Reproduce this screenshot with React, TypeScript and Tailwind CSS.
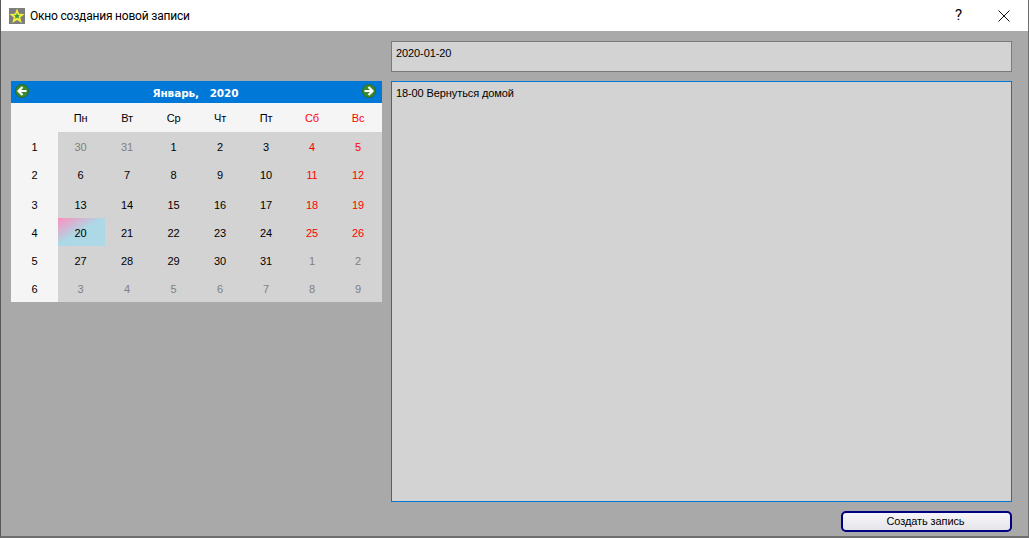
const WEEKDAYS = ["Пн", "Вт", "Ср", "Чт", "Пт", "Сб", "Вс"];

type Day = { n: number; muted?: boolean };

const WEEKS: { week: number; days: Day[] }[] = [
  { week: 1, days: [{ n: 30, muted: true }, { n: 31, muted: true }, { n: 1 }, { n: 2 }, { n: 3 }, { n: 4 }, { n: 5 }] },
  { week: 2, days: [{ n: 6 }, { n: 7 }, { n: 8 }, { n: 9 }, { n: 10 }, { n: 11 }, { n: 12 }] },
  { week: 3, days: [{ n: 13 }, { n: 14 }, { n: 15 }, { n: 16 }, { n: 17 }, { n: 18 }, { n: 19 }] },
  { week: 4, days: [{ n: 20 }, { n: 21 }, { n: 22 }, { n: 23 }, { n: 24 }, { n: 25 }, { n: 26 }] },
  { week: 5, days: [{ n: 27 }, { n: 28 }, { n: 29 }, { n: 30 }, { n: 31 }, { n: 1, muted: true }, { n: 2, muted: true }] },
  { week: 6, days: [{ n: 3, muted: true }, { n: 4, muted: true }, { n: 5, muted: true }, { n: 6, muted: true }, { n: 7, muted: true }, { n: 8, muted: true }, { n: 9, muted: true }] },
];

function NavArrow({ dir }: { dir: "left" | "right" }) {
  return (
    <svg width="14" height="14" viewBox="0 0 14 14">
      <circle cx="7" cy="7" r="6.5" fill="#3c8a2e" stroke="#2c6b24" />
      <path
        d={dir === "left" ? "M11.5 7H4M7.5 3 3.5 7 7.5 11" : "M2.5 7H10M6.5 3 10.5 7 6.5 11"}
        fill="none"
        stroke="#fff"
        strokeWidth="2.2"
      />
    </svg>
  );
}

function StarIcon() {
  return (
    <div className="flex h-4 w-4 items-center justify-center bg-[#7d7d7d]">
      <svg width="16" height="16" viewBox="0 0 16 16">
        <path d="M8 0.5 10 5.8 15.6 6 11.2 9.5 12.8 15 8 11.9 3.2 15 4.8 9.5 0.4 6 6 5.8Z" fill="#f5ee3c" />
        <path d="M8 5 9 7 11 7.2 9.5 8.7 10 10.8 8 9.7 6 10.8 6.5 8.7 5 7.2 7 7Z" fill="#3f9a45" />
      </svg>
    </div>
  );
}

function Calendar() {
  return (
    <div className="w-[371px] font-['Liberation_Sans',sans-serif] text-[11px] tracking-[-0.2px] text-black">
      <div className="flex h-[22px] items-center justify-between bg-[#0078d7] pl-[4px] pr-[6px]">
        <div className="-mt-[2px]"><NavArrow dir="left" /></div>
        <span className="pt-[4px] font-['DejaVu_Sans',sans-serif] text-[10.5px] font-bold tracking-[-0.1px] text-white">Январь,&nbsp;&nbsp;&nbsp;2020</span>
        <div className="-mt-[2px]"><NavArrow dir="right" /></div>
      </div>
      <div className="grid h-[29px] grid-cols-[47px_47px_46px_47px_46px_46px_46px_46px] items-center bg-[#f5f5f5] pt-[1px]">
        <span />
        {WEEKDAYS.map((d, i) => (
          <span key={d} className={`pr-[2px] text-center ${i >= 5 ? "text-[#ff0000]" : ""}`}>{d}</span>
        ))}
      </div>
      <div className="grid h-[170px] grid-cols-[47px_47px_46px_47px_46px_46px_46px_46px] grid-rows-[29px_28px_29px_28px_28px_28px] bg-[#d3d3d3]">
        {WEEKS.map((w) => {
          const rowPad = w.week > 2 ? "pt-[3px]" : "pt-[1px]";
          return (
            <div key={w.week} className="contents">
              <span className={`flex items-center justify-center bg-[#f5f5f5] ${rowPad}`}>{w.week}</span>
              {w.days.map((d, i) => {
                const selected = w.week === 4 && d.n === 20;
                const color = d.muted ? "text-[#808080]" : i >= 5 ? "text-[#ff0000]" : "text-black";
                return (
                  <span
                    key={i}
                    className={`flex items-center justify-center pr-[2px] ${rowPad} ${color} ${
                      selected ? "bg-[linear-gradient(150deg,#ff8fbe_0%,#add8e6_48%,#add8e6_100%)]" : ""
                    }`}
                  >
                    {d.n}
                  </span>
                );
              })}
            </div>
          );
        })}
      </div>
    </div>
  );
}

export default function App() {
  return (
    <div className="flex h-[538px] w-[1029px] flex-col overflow-hidden border-b-2 border-l border-r border-b-[#6e6e6e] border-l-[#5a5a5a] border-r-[#6e6e6e] bg-[#a9a9a9] font-['Roboto',sans-serif]">
      <div className="flex h-[31px] shrink-0 items-center bg-white pl-[8px]">
        <StarIcon />
        <span className="ml-[5px] text-[12px] tracking-[-0.2px] text-black">Окно создания новой записи</span>
        <span className="ml-auto mr-[36px] text-[15px] text-black">?</span>
        <svg className="mr-[18px]" width="12" height="12" viewBox="0 0 12 12">
          <path d="M.5.5l11 11M11.5.5l-11 11" stroke="#111" strokeWidth="1" fill="none" />
        </svg>
      </div>

      <div className="flex flex-1 pl-[10px] pt-[10px]">
        <div className="mt-[40px]">
          <Calendar />
        </div>
        <div className="ml-[9px] flex w-[621px] flex-col font-['Liberation_Sans',sans-serif] text-[11px] tracking-[-0.1px] text-black">
          <div className="h-[31px] border border-[#7a7a7a] bg-[#d3d3d3] px-[4px] pt-[3px]">2020-01-20</div>
          <div className="mt-[9px] h-[421px] border border-[#0078d7] bg-[#d3d3d3] px-[4px] pt-[3px]">18-00 Вернуться домой</div>
          <div className="mt-[9px] flex justify-end">
            <button className="h-[21px] w-[171px] rounded-[5px] border-2 border-[#000080] bg-[linear-gradient(#f6f6fa,#e6e6ea)] pr-[2px] text-[11px]">
              Создать запись
            </button>
          </div>
        </div>
      </div>
    </div>
  );
}
